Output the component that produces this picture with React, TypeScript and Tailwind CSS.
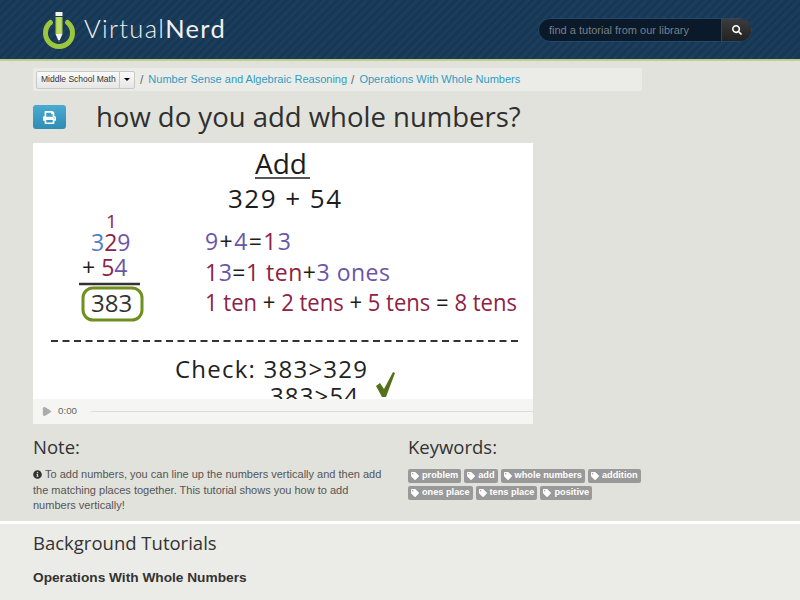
import { Play } from "lucide-react"
import { FaInfoCircle, FaPrint, FaSearch, FaTag } from "react-icons/fa"

const row1 = ["problem", "add", "whole numbers", "addition"]
const row2 = ["ones place", "tens place", "positive"]

function Logo() {
  return (
    <svg width="34" height="38" viewBox="0 0 34 38" className="shrink-0">
      <path d="M8.5 11.5 A13.5 13.5 0 1 0 25.5 11.5" fill="none" stroke="#9cc63c" strokeWidth="5" strokeLinecap="round" />
      <rect x="13.5" y="1" width="7" height="4" fill="#f2f4ee" />
      <rect x="13.5" y="6" width="7" height="17" fill="#a9cf4a" />
      <path d="M13.5 23 L20.5 23 L17 31 Z" fill="#f2f4ee" />
      <path d="M16.2 29 L17.8 29 L17 31 Z" fill="#26343f" />
      <path d="M16 6 V23 M18 6 V23" stroke="#d9e9a8" strokeWidth="0.8" />
    </svg>
  )
}

function KeywordTag({ label }: { label: string }) {
  return (
    <span className="flex h-[14px] items-center gap-[3px] rounded-[2px] bg-[#999999] pl-[3px] pr-[3px] font-['Liberation_Sans'] text-[9.2px] font-bold text-white">
      <FaTag size={8} className="shrink-0" />
      <span>{label}</span>
    </span>
  )
}

function VideoFrame() {
  const hand = "'Open Sans', sans-serif"
  const red = "#8c2346"
  const purple = "#6a55a8"
  const blue = "#4f7fc0"
  const ink = "#1c1c1c"
  return (
    <svg width="500" height="256" viewBox="0 0 500 256" className="block" fontFamily={hand}>
      <rect width="500" height="256" fill="white" />
      <text x="222" y="31" fontSize="28" fill={ink}>Add</text>
      <path d="M222 35 H277" stroke={ink} strokeWidth="1.6" />
      <text x="195" y="65" fontSize="26" fill={ink} textLength="113" lengthAdjust="spacing">329 + 54</text>

      <text x="73" y="85" fontSize="19" fill={red}>1</text>
      <text x="58" y="108" fontSize="23">
        <tspan fill={blue}>3</tspan>
        <tspan fill={red}>2</tspan>
        <tspan fill={purple}>9</tspan>
      </text>
      <text x="49" y="133" fontSize="23">
        <tspan fill={ink}>+ </tspan>
        <tspan fill={red}>5</tspan>
        <tspan fill={purple}>4</tspan>
      </text>
      <path d="M46 141 H107" stroke="#333" strokeWidth="2.5" />
      <rect x="50" y="145" width="59" height="32" rx="10" fill="none" stroke="#6f8f1e" strokeWidth="3" />
      <text x="58" y="169" fontSize="24" fill="#333">383</text>

      <text x="172" y="107" fontSize="23" textLength="86" lengthAdjust="spacing">
        <tspan fill={purple}>9</tspan>
        <tspan fill={ink}>+</tspan>
        <tspan fill={purple}>4</tspan>
        <tspan fill={ink}>=</tspan>
        <tspan fill={red}>1</tspan>
        <tspan fill={purple}>3</tspan>
      </text>
      <text x="172" y="138" fontSize="23" textLength="185" lengthAdjust="spacing">
        <tspan fill={red}>1</tspan>
        <tspan fill={purple}>3</tspan>
        <tspan fill={ink}>=</tspan>
        <tspan fill={red}>1 ten</tspan>
        <tspan fill={ink}>+</tspan>
        <tspan fill={purple}>3 ones</tspan>
      </text>
      <text x="172" y="168" fontSize="23" textLength="312" lengthAdjust="spacingAndGlyphs">
        <tspan fill={red}>1 ten</tspan>
        <tspan fill={ink}> + </tspan>
        <tspan fill={red}>2 tens</tspan>
        <tspan fill={ink}> + </tspan>
        <tspan fill={red}>5 tens</tspan>
        <tspan fill={ink}> = </tspan>
        <tspan fill={red}>8 tens</tspan>
      </text>
      <path d="M18 198 H486" stroke="#333" strokeWidth="2" strokeDasharray="7 4.5" />
      <text x="142" y="235" fontSize="24" fill="#222" textLength="192" lengthAdjust="spacing">Check: 383&gt;329</text>
      <text x="237" y="262" fontSize="24" fill="#222" textLength="88" lengthAdjust="spacing">383&gt;54</text>
      <path d="M343 243 L347 240 L351 246 L360 229 L362 230 L353 254 L349 254 Z" fill="#55701a" />
    </svg>
  )
}

export default function App() {
  return (
    <div className="h-[600px] w-[800px] overflow-hidden bg-[#e1e2dc] font-['Liberation_Sans',sans-serif]">
      {/* Header */}
      <header className="flex h-[61px] items-start justify-between border-b-2 border-[#bdcf8a] bg-[#1a3b5a] bg-[repeating-linear-gradient(135deg,#1b3e5e_0px,#1b3e5e_3px,#173753_3px,#173753_6px)] pl-[42px] pr-[48px]">
        <div className="mt-[11px] flex items-center gap-[8px]">
          <Logo />
          <span className="mt-[-2px] font-['Lato',sans-serif] text-[25.5px] font-light leading-none tracking-[1.3px] text-[#eef1ee]">
            Virtual<span className="font-normal">Nerd</span>
          </span>
        </div>
        <div className="mt-[18px] flex h-[24px] w-[214px] overflow-hidden rounded-full border border-[#23486a] bg-[#0a1a2a]">
          <div className="flex flex-1 items-center pl-[10px] text-[11px] text-[#7a7f84]">find a tutorial from our library</div>
          <div className="flex w-[30px] items-center justify-center border-l border-[#2c4a66] bg-gradient-to-b from-[#3c3c3c] to-[#222222]">
            <FaSearch size={10} className="text-white" />
          </div>
        </div>
      </header>

      <main className="pl-[33px]">
        {/* Breadcrumb */}
        <nav className="mt-[7px] flex h-[23px] w-[609px] items-center rounded-[2px] bg-[#ebece7] pl-[3px]">
          <div className="flex h-[18px] w-[99px] items-center rounded-[2px] border border-[#c8c8c4] bg-gradient-to-b from-[#fafafa] to-[#e6e6e4] text-[8.5px] text-[#333333]">
            <span className="flex-1 whitespace-nowrap pl-[4px]">Middle School Math</span>
            <span className="flex h-full w-[15px] shrink-0 items-center justify-center border-l border-[#c8c8c4]">
              <span className="h-0 w-0 border-x-[3.5px] border-t-[3.5px] border-x-transparent border-t-black" />
            </span>
          </div>
          <span className="ml-[5px] text-[12px] text-[#666666]">/</span>
          <a className="ml-[5px] text-[11px] text-[#2f9cc4]">Number Sense and Algebraic Reasoning</a>
          <span className="ml-[4px] text-[12px] text-[#666666]">/</span>
          <a className="ml-[5px] text-[11px] text-[#2f9cc4]">Operations With Whole Numbers</a>
        </nav>

        {/* Title */}
        <div className="mt-[11px] flex h-[30px] items-center">
          <button className="flex h-[24px] w-[33px] items-center justify-center rounded-[3px] bg-gradient-to-b from-[#4aaad0] to-[#2f8db5]">
            <FaPrint size={13} className="text-white" />
          </button>
          <h1 className="ml-[30px] font-['Open_Sans',sans-serif] text-[27.5px] leading-none text-[#2f2f2f]">how do you add whole numbers?</h1>
        </div>

        {/* Video */}
        <div className="relative mt-[11px] h-[281px] w-[500px] overflow-hidden bg-white">
          <VideoFrame />
          <div className="absolute bottom-0 left-0 flex h-[25px] w-full items-center bg-[#f5f5f3] pl-[8px]">
            <Play size={11} fill="#aaaaaa" stroke="#aaaaaa" />
            <span className="ml-[6px] text-[9.75px] text-[#666666]">0:00</span>
            <div className="ml-[14px] h-px flex-1 bg-[#dddddd]" />
          </div>
        </div>

        {/* Note and keywords */}
        <div className="mt-[10px] flex h-[86px]">
          <section className="w-[375px]">
            <h2 className="font-['Open_Sans',sans-serif] text-[18.5px] leading-[26px] text-[#333333]">Note:</h2>
            <p className="mt-[7px] w-[355px] text-[11px] leading-[15.7px] text-[#555555]">
              <FaInfoCircle size={9} className="mr-[3px] inline align-[-1px] text-[#333333]" />
              To add numbers, you can line up the numbers vertically and then add the matching places together. This tutorial shows you how to add numbers vertically!
            </p>
          </section>
          <section>
            <h2 className="font-['Open_Sans',sans-serif] text-[18.5px] leading-[26px] text-[#333333]">Keywords:</h2>
            <div className="mt-[9px] flex gap-[3px]">
              {row1.map((k) => (
                <KeywordTag key={k} label={k} />
              ))}
            </div>
            <div className="mt-[3px] flex gap-[3px]">
              {row2.map((k) => (
                <KeywordTag key={k} label={k} />
              ))}
            </div>
          </section>
        </div>
      </main>

      {/* Background tutorials */}
      <section className="mt-[1px] h-[80px] border-t-[3px] border-white bg-[#ebece7] pl-[33px]">
        <h2 className="pt-[6px] font-['Open_Sans',sans-serif] text-[18.5px] leading-[26px] text-[#333333]">Background Tutorials</h2>
        <h3 className="mt-[14px] text-[13.7px] font-bold leading-[16px] text-[#333333]">Operations With Whole Numbers</h3>
      </section>
    </div>
  )
}
